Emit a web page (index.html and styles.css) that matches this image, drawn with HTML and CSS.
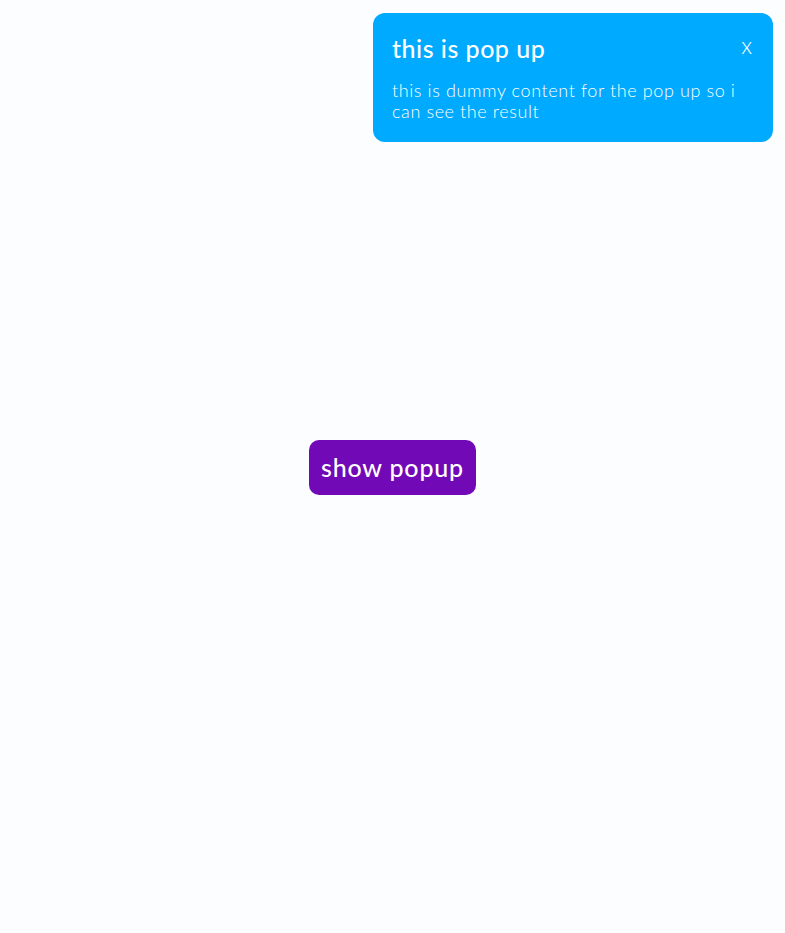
FILE: index.html
```html
<!DOCTYPE html>
<html>
<head>
<meta charset="utf-8">
<link rel="stylesheet" href="styles.css">
</head>
<body>
<main class="stage">
  <button class="show-btn">show popup</button>
</main>
<div class="popup">
  <div class="popup-head">
    <h2 class="popup-title">this is pop up</h2>
    <span class="popup-close">x</span>
  </div>
  <p class="popup-text">this is dummy content for the pop up so i can see the result</p>
</div>
</body>
</html>
```

FILE: styles.css
```css
* { box-sizing: border-box; }
html, body { margin: 0; padding: 0; }
body {
  background: #fcfdff;
  font-family: Lato, "Open Sans", sans-serif;
}
.stage {
  min-height: 100vh;
  display: flex;
  align-items: center;
  justify-content: center;
}
.show-btn {
  background: #7209b7;
  color: #fff;
  border: none;
  border-radius: 10px;
  font-family: Lato, sans-serif;
  font-size: 25px;
  font-weight: 500;
  letter-spacing: 0.8px;
  width: 167px;
  height: 55px;
  padding: 0;
  margin-top: 1px;
}
.popup {
  position: fixed;
  top: 13px;
  right: 12px;
  width: 400px;
  height: 129px;
  background: #00aaff;
  color: #fff;
  border-radius: 12px;
  padding: 18px 20px 0 19px;
}
.popup-head {
  display: flex;
  justify-content: space-between;
  align-items: center;
}
.popup-title {
  margin: 0;
  font-size: 25px;
  font-weight: 500;
  letter-spacing: 0.5px;
  line-height: 34px;
}
.popup-close {
  font-size: 23px;
  font-weight: 300;
  line-height: 26px;
  margin-top: -6px;
  margin-right: 1px;
}
.popup-text {
  margin: 15px 0 0;
  font-size: 18px;
  font-weight: 300;
  letter-spacing: 0.6px;
  line-height: 21px;
}
```
